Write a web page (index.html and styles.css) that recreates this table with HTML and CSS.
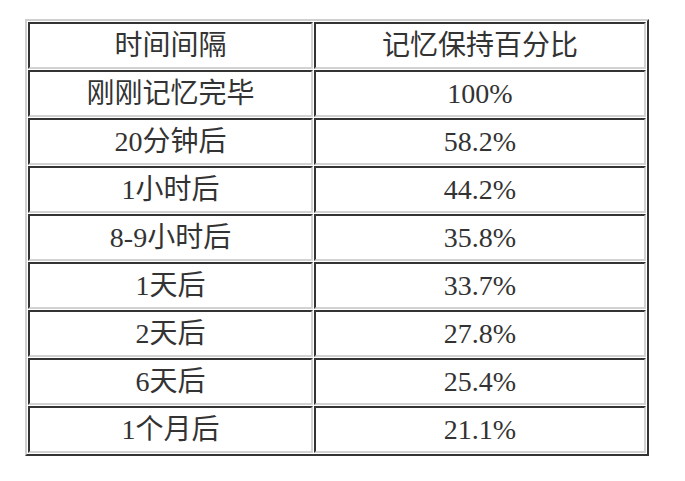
FILE: index.html
```html
<!DOCTYPE html>
<html lang="zh">
<head>
<meta charset="utf-8">
<title>记忆保持</title>
<link rel="stylesheet" href="styles.css">
</head>
<body>
<div class="wrap">
<table class="memory">
<colgroup><col class="c1"><col class="c2"></colgroup>
<thead>
<tr><th>时间间隔</th><th>记忆保持百分比</th></tr>
</thead>
<tbody>
<tr><td>刚刚记忆完毕</td><td>100%</td></tr>
<tr><td>20分钟后</td><td>58.2%</td></tr>
<tr><td>1小时后</td><td>44.2%</td></tr>
<tr><td>8-9小时后</td><td>35.8%</td></tr>
<tr><td>1天后</td><td>33.7%</td></tr>
<tr><td>2天后</td><td>27.8%</td></tr>
<tr><td>6天后</td><td>25.4%</td></tr>
<tr><td>1个月后</td><td>21.1%</td></tr>
</tbody>
</table>
</div>
</body>
</html>
```
FILE: styles.css
```css
html, body {
  margin: 0;
  padding: 0;
  background: #ffffff;
}
.wrap {
  padding: 19px 0 0 25px;
}
.memory {
  border-collapse: separate;
  border-spacing: 1px;
  table-layout: fixed;
  width: 624px;
  border-style: solid;
  border-width: 2px;
  border-color: #cfcfcf #333333 #333333 #cfcfcf;
  font-family: "Liberation Serif", "Noto Sans CJK SC", serif;
  font-size: 28px;
  color: #333333;
}
.c1 { width: 285px; }
.c2 { width: 332px; }
.memory th,
.memory td {
  font-weight: normal;
  text-align: center;
  vertical-align: middle;
  height: 43px;
  padding: 0;
  line-height: 43px;
  border-style: solid;
  border-width: 2px;
  border-color: #333333 #d2d2d2 #d2d2d2 #333333;
}
```
